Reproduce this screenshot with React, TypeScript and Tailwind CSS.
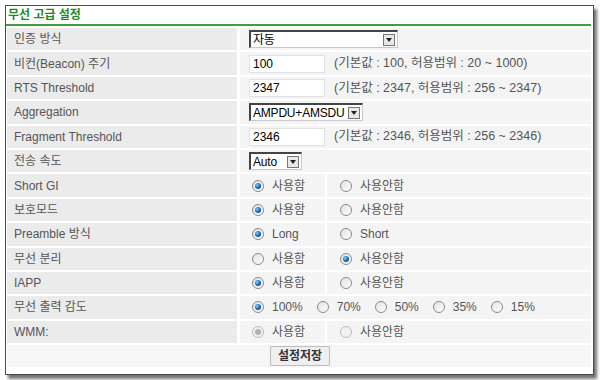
import React from 'react';

const FONT = { fontFamily: '"Liberation Sans", "Noto Sans CJK KR", sans-serif' };

const Radio = ({ checked = false, disabled = false }: { checked?: boolean; disabled?: boolean }) => (
  <span
    className={`inline-flex w-[12px] h-[12px] rounded-full border items-center justify-center shrink-0 ${
      disabled ? 'border-[#bdbdbd] bg-[#f2f2f2]' : 'border-[#8a8a8a] bg-gradient-to-br from-[#e2e2e2] to-white'
    }`}
  >
    {checked && (
      <span
        className={`w-[6px] h-[6px] rounded-full ${
          disabled ? 'bg-[#b0b0b0]' : 'bg-[radial-gradient(circle_at_35%_35%,#7fd0ff,#0a5bb8_60%,#06306a)]'
        }`}
      />
    )}
  </span>
);

const Option = ({ label, checked, disabled }: { label: string; checked?: boolean; disabled?: boolean }) => (
  <span className="inline-flex items-center gap-[8px]">
    <Radio checked={checked} disabled={disabled} />
    <span className="text-[#555]">{label}</span>
  </span>
);

const Select = ({ value, width }: { value: string; width: string }) => (
  <div className={`h-[18px] ${width} flex items-center bg-white border border-[#c8c8c8] border-l-[#444] border-t-[#444] border-l-2 border-t-2`}>
    <span className="flex-1 pl-[2px] text-black leading-none whitespace-nowrap tracking-[-0.2px]">{value}</span>
    <span className="w-[12px] h-[12px] mr-[2px] ml-[3px] border border-[#777] bg-[#e8e8e8] flex items-center justify-center shrink-0">
      <span className="w-0 h-0 border-l-[3px] border-r-[3px] border-t-[4px] border-l-transparent border-r-transparent border-t-[#222]" />
    </span>
  </div>
);

const TextInput = ({ value }: { value: string }) => (
  <div className="w-[76px] h-[18px] bg-white border border-[#e2e2e2] flex items-center pl-[3px] text-black">
    {value}
  </div>
);

const Row = ({ label, children }: { label: string; children: React.ReactNode }) => (
  <div className="grid grid-cols-[230px_1fr] gap-[3px] h-[22.4px]">
    <div className="bg-[#ebebeb] flex items-center pl-[7px] text-[#555]">{label}</div>
    {children}
  </div>
);

const ValueCell = ({ children }: { children: React.ReactNode }) => (
  <div className="bg-[#f4f4f4] flex items-center pl-[9px] gap-[8px]">{children}</div>
);

const RadioPair = ({ a, b, first, disabled }: { a: string; b: string; first: boolean; disabled?: boolean }) => (
  <div className="grid grid-cols-[85px_1fr] gap-[2px]">
    <div className="bg-[#f4f4f4] flex items-center pl-[12px]">
      <Option label={a} checked={first} disabled={disabled} />
    </div>
    <div className="bg-[#f4f4f4] flex items-center pl-[13px]">
      <Option label={b} checked={!first} disabled={disabled} />
    </div>
  </div>
);

const Hint = ({ children }: { children: React.ReactNode }) => (
  <span className="text-[#555] ml-[1px] text-[12.5px]">{children}</span>
);

export default function App() {
  return (
    <div className="w-[600px] h-[380px] bg-white pt-[5px] pl-[5px] text-[12px]" style={FONT}>
      <div className="w-[589px] h-[370px] border border-[#4a4a4a] bg-white shadow-[3px_4px_3px_rgba(0,0,0,0.55)] flex flex-col">
        <div className="h-[18px] flex items-center pl-[2px] text-[#228b22] font-bold">무선 고급 설정</div>
        <div className="h-[2px] bg-[#3f9f3f] mr-[2px]" />
        <div className="flex flex-col gap-[2px] pl-[1px] pr-[2px] pt-[2px]">
          <Row label="인증 방식">
            <ValueCell>
              <Select value="자동" width="w-[149px]" />
            </ValueCell>
          </Row>
          <Row label="비컨(Beacon) 주기">
            <ValueCell>
              <TextInput value="100" />
              <Hint>(기본값 : 100, 허용범위 : 20 ~ 1000)</Hint>
            </ValueCell>
          </Row>
          <Row label="RTS Threshold">
            <ValueCell>
              <TextInput value="2347" />
              <Hint>(기본값 : 2347, 허용범위 : 256 ~ 2347)</Hint>
            </ValueCell>
          </Row>
          <Row label="Aggregation">
            <ValueCell>
              <Select value="AMPDU+AMSDU" width="w-[114px]" />
            </ValueCell>
          </Row>
          <Row label="Fragment Threshold">
            <ValueCell>
              <TextInput value="2346" />
              <Hint>(기본값 : 2346, 허용범위 : 256 ~ 2346)</Hint>
            </ValueCell>
          </Row>
          <Row label="전송 속도">
            <ValueCell>
              <Select value="Auto" width="w-[53px]" />
            </ValueCell>
          </Row>
          <Row label="Short GI">
            <RadioPair a="사용함" b="사용안함" first />
          </Row>
          <Row label="보호모드">
            <RadioPair a="사용함" b="사용안함" first />
          </Row>
          <Row label="Preamble 방식">
            <RadioPair a="Long" b="Short" first />
          </Row>
          <Row label="무선 분리">
            <RadioPair a="사용함" b="사용안함" first={false} />
          </Row>
          <Row label="IAPP">
            <RadioPair a="사용함" b="사용안함" first />
          </Row>
          <Row label="무선 출력 감도">
            <div className="bg-[#f4f4f4] flex items-center pl-[12px] gap-[14px]">
              <Option label="100%" checked />
              <Option label="70%" />
              <Option label="50%" />
              <Option label="35%" />
              <Option label="15%" />
            </div>
          </Row>
          <Row label="WMM:">
            <RadioPair a="사용함" b="사용안함" first disabled />
          </Row>
          <div className="h-[22.4px] bg-[#f6f6f6] flex items-center pl-[263px]">
            <button className="h-[20px] px-[7px] bg-[#efefef] border border-[#bdbdbd] font-bold text-[#333] leading-none">
              설정저장
            </button>
          </div>
        </div>
      </div>
    </div>
  );
}
